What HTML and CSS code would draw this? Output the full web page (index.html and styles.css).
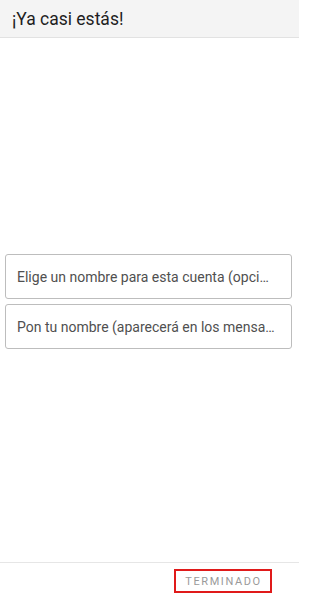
FILE: index.html
```html
<!DOCTYPE html>
<html lang="es">
<head>
<meta charset="utf-8">
<link rel="stylesheet" href="styles.css">
</head>
<body>
<div class="app">
  <header class="header"><h1 class="title">¡Ya casi estás!</h1></header>
  <main class="main">
    <div class="field"><span class="placeholder">Elige un nombre para esta cuenta (opci…</span></div>
    <div class="field"><span class="placeholder">Pon tu nombre (aparecerá en los mensa…</span></div>
  </main>
  <footer class="footer"><span class="done">TERMINADO</span></footer>
</div>
</body>
</html>
```
FILE: styles.css
```css
html, body { margin: 0; padding: 0; background: #fff; }
body { font-family: Roboto, "Noto Sans", sans-serif; }
.app { width: 299px; height: 599px; display: flex; flex-direction: column; }
.header { height: 37px; background: #f4f4f4; border-bottom: 1px solid #e2e2e2; display: flex; align-items: center; padding-left: 12px; flex: none; }
.title { margin: 0; font-size: 17.5px; font-weight: 400; color: #1e1e1e; }
.main { flex: 1; display: flex; flex-direction: column; justify-content: center; gap: 5px; padding: 3px 7px 0 5px; }
.field { height: 43px; border: 1px solid #bdbdbd; border-radius: 3px; display: flex; align-items: center; padding-left: 11px; overflow: hidden; white-space: nowrap; }
.placeholder { font-size: 14px; color: #505050; }
.footer { height: 36px; border-top: 1px solid #e6e6e6; display: flex; justify-content: flex-end; align-items: center; padding-right: 27px; flex: none; }
.done { border: 2px solid #e01a1a; width: 93px; height: 20px; display: flex; align-items: center; justify-content: center; font-size: 11px; letter-spacing: 1.6px; color: #9a9a9a; padding-left: 1px; box-sizing: content-box; }
```
